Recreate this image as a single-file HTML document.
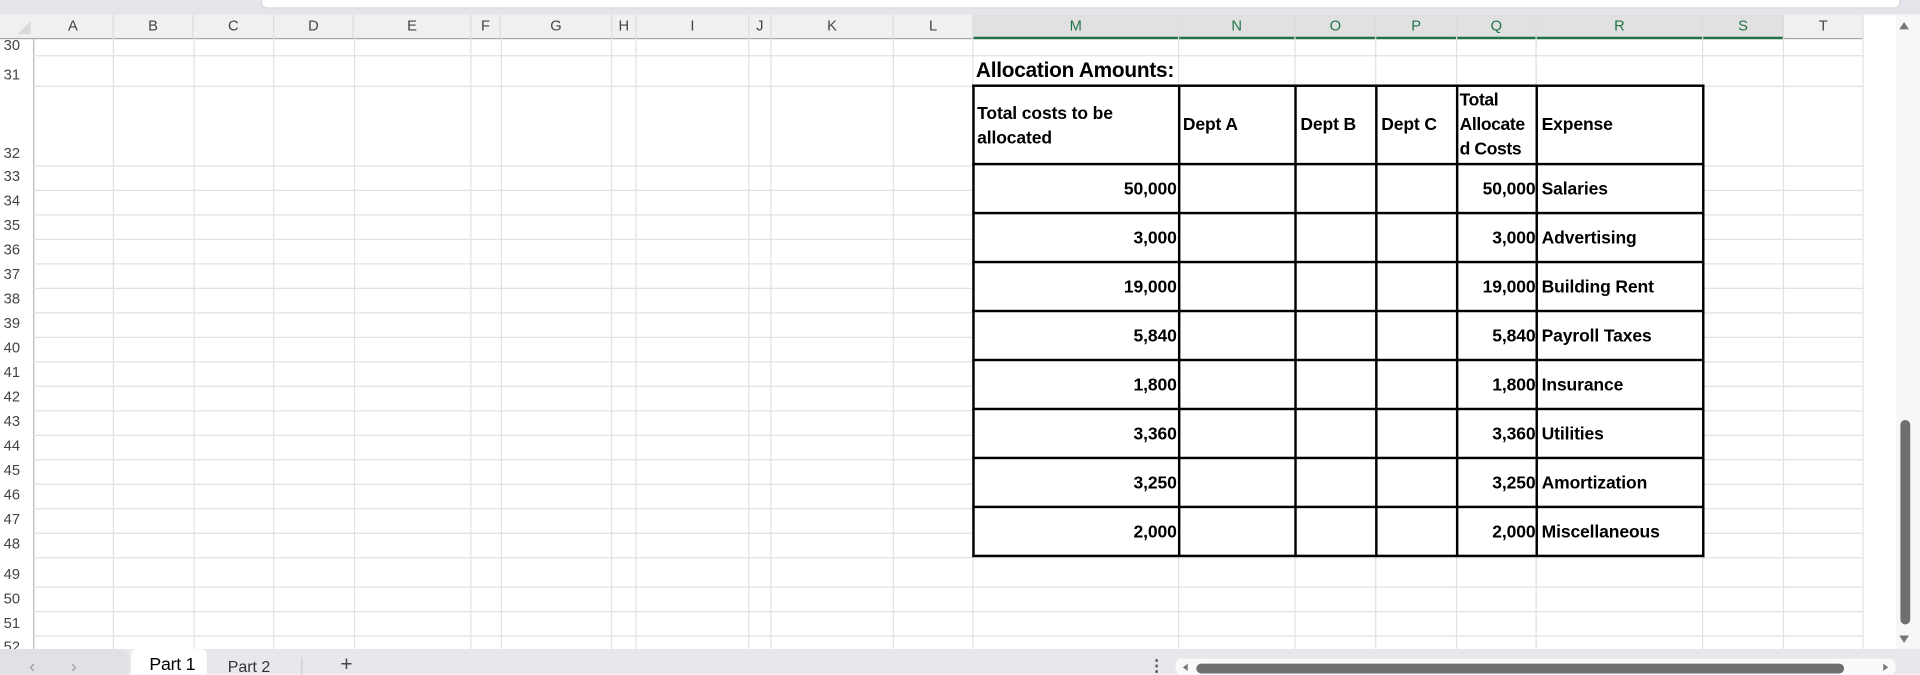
<!DOCTYPE html>
<html><head><meta charset="utf-8"><style>
html,body{margin:0;padding:0;width:1920px;height:674px;overflow:hidden;background:#fff}
#s{position:absolute;left:0;top:0;width:1568px;height:551px;transform:scale(1.22449);transform-origin:0 0;font-family:"Liberation Sans",sans-serif;background:#fff;overflow:hidden}
.a{position:absolute}
.vl{position:absolute;width:1px;background:#e1e1e1;top:31px;height:499px}
.hl{position:absolute;height:1px;background:#e1e1e1;left:27px;width:1495px}
.ch{position:absolute;top:12px;height:19px;line-height:19px;text-align:center;font-size:12px;color:#444;border-right:1px solid #dcdcdc;box-sizing:border-box}
.rh{position:absolute;left:0;width:24px;text-align:left;padding-left:3px;font-size:12px;color:#444}
.t{position:absolute;font-weight:bold;font-size:14.3px;color:#000;letter-spacing:-0.1px;white-space:nowrap}
.tb{position:absolute;background:#000}
</style></head><body><div id="s">
<div class="a" style="left:0;top:0;width:1568px;height:12px;background:#e6e4ea"></div>
<div class="a" style="left:213px;top:0;width:1337px;height:6px;background:#fff;border-radius:0 0 5px 5px;border:1px solid #d8d8d8;border-top:none"></div>
<div class="a" style="left:0;top:12px;width:1522px;height:19px;background:#f0f0f0;border-bottom:1px solid #a8a8a8"></div>
<div class="a" style="left:795px;top:12px;width:662px;height:18px;background:#e1e1e1;border-bottom:2px solid #217346"></div>
<div class="a" style="left:14px;top:17px;width:0;height:0;border-left:11px solid transparent;border-bottom:11px solid #dadada"></div>
<div class="a" style="left:27px;top:31px;width:1px;height:499px;background:#b8b8b8"></div>
<div class="ch" style="left:27px;width:66px">A</div>
<div class="ch" style="left:93px;width:65px">B</div>
<div class="ch" style="left:158px;width:66px">C</div>
<div class="ch" style="left:224px;width:65px">D</div>
<div class="ch" style="left:289px;width:96px">E</div>
<div class="ch" style="left:385px;width:24px">F</div>
<div class="ch" style="left:409px;width:91px">G</div>
<div class="ch" style="left:500px;width:20px">H</div>
<div class="ch" style="left:520px;width:92px">I</div>
<div class="ch" style="left:612px;width:18px">J</div>
<div class="ch" style="left:630px;width:100px">K</div>
<div class="ch" style="left:730px;width:65px">L</div>
<div class="ch" style="left:795px;width:168px;color:#217346">M</div>
<div class="ch" style="left:963px;width:95px;color:#217346">N</div>
<div class="ch" style="left:1058px;width:66px;color:#217346">O</div>
<div class="ch" style="left:1124px;width:66px;color:#217346">P</div>
<div class="ch" style="left:1190px;width:65px;color:#217346">Q</div>
<div class="ch" style="left:1255px;width:136px;color:#217346">R</div>
<div class="ch" style="left:1391px;width:66px;color:#217346">S</div>
<div class="ch" style="left:1457px;width:65px">T</div>
<div class="vl" style="left:92px"></div><div class="vl" style="left:158px"></div><div class="vl" style="left:223px"></div><div class="vl" style="left:289px"></div><div class="vl" style="left:384px"></div><div class="vl" style="left:409px"></div><div class="vl" style="left:499px"></div><div class="vl" style="left:519px"></div><div class="vl" style="left:611px"></div><div class="vl" style="left:629px"></div><div class="vl" style="left:729px"></div><div class="vl" style="left:794px"></div><div class="vl" style="left:962px"></div><div class="vl" style="left:1057px"></div><div class="vl" style="left:1123px"></div><div class="vl" style="left:1189px"></div><div class="vl" style="left:1254px"></div><div class="vl" style="left:1390px"></div><div class="vl" style="left:1456px"></div><div class="vl" style="left:1521px"></div>
<div class="hl" style="top:45px"></div><div class="hl" style="top:70px"></div><div class="hl" style="top:135px"></div><div class="hl" style="top:155px"></div><div class="hl" style="top:175px"></div><div class="hl" style="top:195px"></div><div class="hl" style="top:215px"></div><div class="hl" style="top:235px"></div><div class="hl" style="top:255px"></div><div class="hl" style="top:275px"></div><div class="hl" style="top:295px"></div><div class="hl" style="top:315px"></div><div class="hl" style="top:335px"></div><div class="hl" style="top:355px"></div><div class="hl" style="top:375px"></div><div class="hl" style="top:395px"></div><div class="hl" style="top:415px"></div><div class="hl" style="top:435px"></div><div class="hl" style="top:455px"></div><div class="hl" style="top:479px"></div><div class="hl" style="top:499px"></div><div class="hl" style="top:519px"></div>
<div class="rh" style="top:30px">30</div><div class="rh" style="top:54px">31</div><div class="rh" style="top:118px">32</div>
<div class="rh" style="top:137px">33</div><div class="rh" style="top:157px">34</div><div class="rh" style="top:177px">35</div><div class="rh" style="top:197px">36</div><div class="rh" style="top:217px">37</div><div class="rh" style="top:237px">38</div><div class="rh" style="top:257px">39</div><div class="rh" style="top:277px">40</div><div class="rh" style="top:297px">41</div><div class="rh" style="top:317px">42</div><div class="rh" style="top:337px">43</div><div class="rh" style="top:357px">44</div><div class="rh" style="top:377px">45</div><div class="rh" style="top:397px">46</div><div class="rh" style="top:417px">47</div><div class="rh" style="top:437px">48</div><div class="rh" style="top:462px">49</div><div class="rh" style="top:482px">50</div><div class="rh" style="top:502px">51</div><div class="rh" style="top:521px">52</div>
<div class="a" style="left:795px;top:70px;width:596px;height:385px;background:#fff"></div>
<div class="t" style="left:797px;top:48px;font-size:17px;letter-spacing:-0.2px">Allocation Amounts:</div>
<div class="tb" style="left:794px;top:69px;width:598px;height:2px"></div>
<div class="tb" style="left:794px;top:133px;width:598px;height:2px"></div>
<div class="tb" style="left:794px;top:173px;width:598px;height:2px"></div>
<div class="tb" style="left:794px;top:213px;width:598px;height:2px"></div>
<div class="tb" style="left:794px;top:253px;width:598px;height:2px"></div>
<div class="tb" style="left:794px;top:293px;width:598px;height:2px"></div>
<div class="tb" style="left:794px;top:333px;width:598px;height:2px"></div>
<div class="tb" style="left:794px;top:373px;width:598px;height:2px"></div>
<div class="tb" style="left:794px;top:413px;width:598px;height:2px"></div>
<div class="tb" style="left:794px;top:453px;width:598px;height:2px"></div>
<div class="tb" style="left:794px;top:69px;width:2px;height:386px"></div>
<div class="tb" style="left:962px;top:69px;width:2px;height:386px"></div>
<div class="tb" style="left:1057px;top:69px;width:2px;height:386px"></div>
<div class="tb" style="left:1123px;top:69px;width:2px;height:386px"></div>
<div class="tb" style="left:1189px;top:69px;width:2px;height:386px"></div>
<div class="tb" style="left:1254px;top:69px;width:2px;height:386px"></div>
<div class="tb" style="left:1390px;top:69px;width:2px;height:386px"></div>
<div class="t" style="left:798px;top:83px;line-height:20px">Total costs to be<br>allocated</div>
<div class="t" style="left:966px;top:94px">Dept A</div>
<div class="t" style="left:1062px;top:94px">Dept B</div>
<div class="t" style="left:1128px;top:94px">Dept C</div>
<div class="t" style="left:1192px;top:72px;line-height:20px;letter-spacing:-0.3px">Total<br>Allocate<br>d Costs</div>
<div class="t" style="left:1259px;top:94px">Expense</div>
<div class="t" style="left:796px;top:147px;width:165px;text-align:right">50,000</div><div class="t" style="left:1191px;top:147px;width:63px;text-align:right">50,000</div><div class="t" style="left:1259px;top:147px">Salaries</div>
<div class="t" style="left:796px;top:187px;width:165px;text-align:right">3,000</div><div class="t" style="left:1191px;top:187px;width:63px;text-align:right">3,000</div><div class="t" style="left:1259px;top:187px">Advertising</div>
<div class="t" style="left:796px;top:227px;width:165px;text-align:right">19,000</div><div class="t" style="left:1191px;top:227px;width:63px;text-align:right">19,000</div><div class="t" style="left:1259px;top:227px">Building Rent</div>
<div class="t" style="left:796px;top:267px;width:165px;text-align:right">5,840</div><div class="t" style="left:1191px;top:267px;width:63px;text-align:right">5,840</div><div class="t" style="left:1259px;top:267px">Payroll Taxes</div>
<div class="t" style="left:796px;top:307px;width:165px;text-align:right">1,800</div><div class="t" style="left:1191px;top:307px;width:63px;text-align:right">1,800</div><div class="t" style="left:1259px;top:307px">Insurance</div>
<div class="t" style="left:796px;top:347px;width:165px;text-align:right">3,360</div><div class="t" style="left:1191px;top:347px;width:63px;text-align:right">3,360</div><div class="t" style="left:1259px;top:347px">Utilities</div>
<div class="t" style="left:796px;top:387px;width:165px;text-align:right">3,250</div><div class="t" style="left:1191px;top:387px;width:63px;text-align:right">3,250</div><div class="t" style="left:1259px;top:387px">Amortization</div>
<div class="t" style="left:796px;top:427px;width:165px;text-align:right">2,000</div><div class="t" style="left:1191px;top:427px;width:63px;text-align:right">2,000</div><div class="t" style="left:1259px;top:427px">Miscellaneous</div>
<div class="a" style="left:1522px;top:12px;width:46px;height:518px;background:#fff"></div>
<div class="a" style="left:1548px;top:12px;width:20px;height:518px;background:#f7f7f7"></div>
<div class="a" style="left:1551px;top:18px;width:0;height:0;border-left:4px solid transparent;border-right:4px solid transparent;border-bottom:6px solid #777"></div>
<div class="a" style="left:1551px;top:519px;width:0;height:0;border-left:4px solid transparent;border-right:4px solid transparent;border-top:6px solid #777"></div>
<div class="a" style="left:1552px;top:343px;width:8px;height:167px;background:#6f6f6f;border-radius:4px"></div>
<div class="a" style="left:0;top:530px;width:1568px;height:21px;background:#e9e7ec"></div>
<div class="a" style="left:0;top:530px;width:105px;height:21px;background:#e2e0e5;border-radius:0 6px 0 0"></div>
<div class="a" style="left:24px;top:536px;font-size:14px;color:#999">&#8249;</div>
<div class="a" style="left:58px;top:536px;font-size:14px;color:#999">&#8250;</div>
<div class="a" style="left:107px;top:530px;width:50px;height:21px;background:#fff;border-radius:5px 5px 0 0;padding:0 6px"></div>
<div class="a" style="left:122px;top:535px;font-size:14.5px;color:#000;letter-spacing:-0.2px">Part 1</div>
<div class="a" style="left:186px;top:537px;font-size:13px;color:#333">Part 2</div>
<div class="a" style="left:246px;top:537px;width:1px;height:14px;background:#ccc"></div>
<div class="a" style="left:278px;top:533px;font-size:17px;color:#444">+</div>
<div class="a" style="left:938px;top:536px;font-size:13px;color:#555;font-weight:bold">&#8942;</div>
<div class="a" style="left:960px;top:538px;width:588px;height:13px;background:#fafafa;border-radius:5px"></div>
<div class="a" style="left:966px;top:542px;width:0;height:0;border-top:3px solid transparent;border-bottom:3px solid transparent;border-right:4px solid #777"></div>
<div class="a" style="left:1538px;top:542px;width:0;height:0;border-top:3px solid transparent;border-bottom:3px solid transparent;border-left:4px solid #777"></div>
<div class="a" style="left:977px;top:542px;width:529px;height:8px;background:#6f6f6f;border-radius:4px"></div>
</div></body></html>
